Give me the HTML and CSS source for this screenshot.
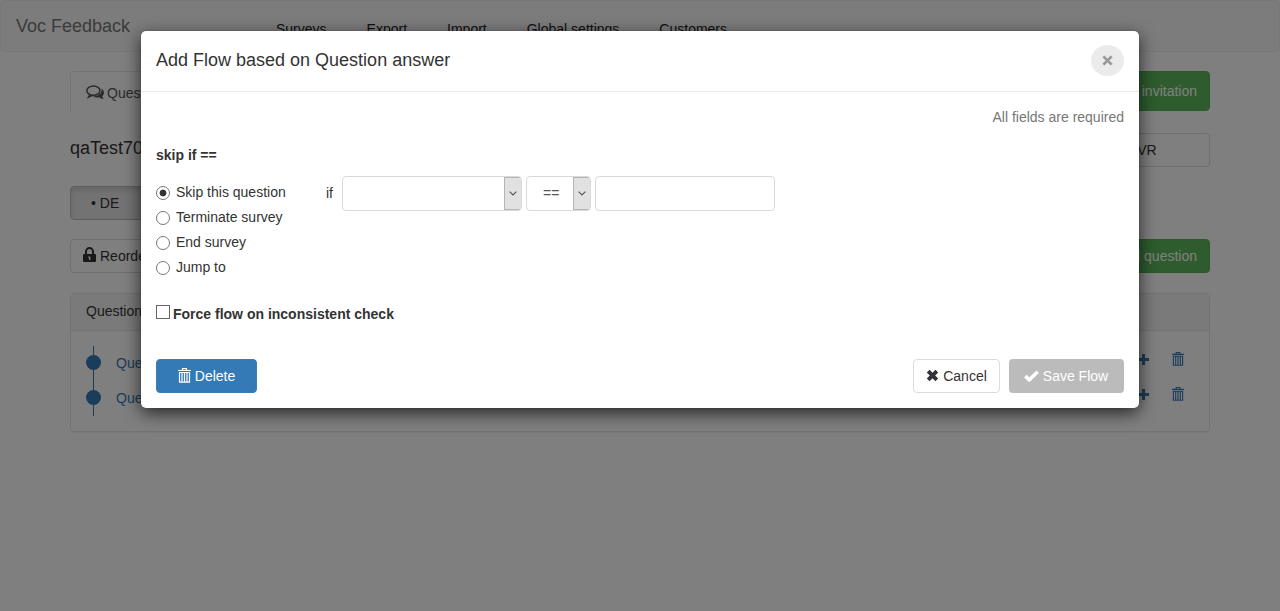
FILE: index.html
```html
<!DOCTYPE html>
<html lang="en">
<head>
<meta charset="utf-8">
<title>Voc Feedback</title>
<link rel="stylesheet" href="styles.css">
</head>
<body>
<svg class="defs" aria-hidden="true">
  <symbol id="trash" viewBox="0 0 13 15" preserveAspectRatio="none">
    <path d="M0 2.500h13M4.500 2V.6h4V2" fill="none" stroke="currentColor" stroke-width="1.200"/>
    <path d="M1.500 4.500h10v9.700h-10zM4 4.500v9.500M6.500 4.500v9.500M9 4.500v9.500" fill="none" stroke="currentColor" stroke-width="1.200"/>
  </symbol>
  <symbol id="cross" viewBox="0 0 12 12">
    <path d="M2 2l8 8M10 2l-8 8" fill="none" stroke="currentColor" stroke-width="3.6"/>
  </symbol>
  <symbol id="cross-thin" viewBox="0 0 12 12">
    <path d="M1.500 1.500l9 9M10.500 1.500l-9 9" fill="none" stroke="currentColor" stroke-width="3"/>
  </symbol>
  <symbol id="plus" viewBox="0 0 11 11">
    <path d="M5.5 0v11M0 5.5h11" fill="none" stroke="currentColor" stroke-width="3"/>
  </symbol>
</svg>

<nav class="navbar">
  <a class="brand">Voc Feedback</a>
  <div class="nav-links"><a>Surveys</a><a>Export</a><a>Import</a><a>Global settings</a><a>Customers</a></div>
</nav>

<main class="container">
  <div class="row tabs-row">
    <div class="tab">
      <svg class="icon-chat" viewBox="0 0 18 15"><ellipse cx="7.4" cy="5.6" rx="6.6" ry="4.700" fill="none" stroke="currentColor" stroke-width="1.5"/><path d="M4 9.400L2.200 12.400l4.500-2" fill="none" stroke="currentColor" stroke-width="1.3"/><path d="M15.500 3.600c3.200 2.200 3.100 5.600.6 7.600.3 1 .9 1.700 1.700 2.600-1.900.1-3.300-.4-4.500-1.500-2.500.5-4.700.1-6.300-1 5.600-.1 9.400-3 8.500-7.700z" fill="currentColor"/></svg>
      <span>Questions</span>
    </div>
    <div class="btn btn-success btn-tall">Send invitation</div>
  </div>
  <div class="row title-row">
    <h1 class="title">qaTest70</h1>
    <div class="btn btn-default btn-channel">IVR</div>
  </div>
  <div class="row lang-row"><div class="btn btn-default btn-lang">• DE</div></div>
  <div class="row tools-row">
    <div class="btn btn-default btn-reorder">
      <svg class="icon-lock" viewBox="0 0 13 16"><path d="M3 8V4.600a3.500 3.500 0 0 1 7 0V8" fill="none" stroke="currentColor" stroke-width="2"/><path fill-rule="evenodd" d="M1 7h11q1 0 1 1v6q0 1-1 1H1q-1 0-1-1V8q0-1 1-1zm4.400 2.500v1.400h.6v2.100h1.400v-3.500z" fill="currentColor"/></svg>
      <span>Reorder</span>
    </div>
    <div class="btn btn-success">Add question</div>
  </div>
  <section class="panel">
    <header class="panel-head">Questions</header>
    <div class="questions">
      <div class="question"><i class="node"></i><a>Question 1</a><svg class="icon-plus"><use href="#plus"/></svg><svg class="row-trash"><use href="#trash"/></svg></div>
      <div class="question"><i class="node"></i><a>Question 2</a><svg class="icon-plus"><use href="#plus"/></svg><svg class="row-trash"><use href="#trash"/></svg></div>
    </div>
  </section>
</main>

<div class="overlay">
  <div class="modal" role="dialog">
    <header class="modal-head">
      <h2>Add Flow based on Question answer</h2>
      <div class="close"><svg class="icon-close"><use href="#cross-thin"/></svg></div>
    </header>
    <div class="modal-body">
      <p class="required">All fields are required</p>
      <p class="rule">skip if ==</p>
      <div class="flow">
        <div class="options">
          <label><i class="radio checked"></i>Skip this question</label>
          <label><i class="radio"></i>Terminate survey</label>
          <label><i class="radio"></i>End survey</label>
          <label><i class="radio"></i>Jump to</label>
        </div>
        <div class="condition">
          <span class="if">if</span>
          <div class="field select wide"><span></span><b class="arrow"><svg class="chevron" viewBox="0 0 8 5"><path d="M.6.6L4 4 7.400.6" fill="none" stroke="#555" stroke-width="1.100"/></svg></b></div>
          <div class="field select narrow"><span>==</span><b class="arrow"><svg class="chevron" viewBox="0 0 8 5"><path d="M.6.6L4 4 7.400.6" fill="none" stroke="#555" stroke-width="1.100"/></svg></b></div>
          <div class="field wide"></div>
        </div>
      </div>
      <label class="force"><i class="checkbox"></i>Force flow on inconsistent check</label>
      <footer class="actions">
        <div class="btn btn-primary"><svg class="icon-trash"><use href="#trash"/></svg><span>Delete</span></div>
        <div class="btn btn-default btn-cancel"><svg class="icon-cross"><use href="#cross"/></svg><span>Cancel</span></div>
        <div class="btn btn-disabled"><svg class="icon-check" viewBox="0 0 15 12"><path d="M1.300 6.200l4 3.600L13.700 1.800" fill="none" stroke="currentColor" stroke-width="3.600"/></svg><span>Save Flow</span></div>
      </footer>
    </div>
  </div>
</div>
</body>
</html>
```
FILE: styles.css
```css
* { box-sizing: border-box; }
body { margin: 0; height: 611px; overflow: hidden; background: #fff; color: #333; font: 14px/20px "Liberation Sans", Arial, sans-serif; }
h1, h2, p { margin: 0; font-weight: normal; }
svg { flex: none; }
.defs { display: none; }

.navbar { display: flex; height: 52px; border: 1px solid #efefef; border-radius: 4px; background: #f8f8f8; }
.brand { width: 275px; padding: 15px 15px; font-size: 18px; color: #777; }
.nav-links { display: flex; gap: 40px; padding-top: 18px; color: #222; }

.container { width: 1140px; margin: 19px auto 0; }
.row { display: flex; justify-content: space-between; }
.tab { display: flex; gap: 3px; width: 130px; height: 42px; padding: 11px 15px; border: 1px solid #e9e9e9; border-bottom: 0; border-radius: 4px 4px 0 0; color: #555; }
.icon-chat { width: 18px; height: 15px; margin-top: 2px; }
.btn { display: flex; align-items: center; justify-content: center; height: 34px; padding: 0 12px; border: 1px solid transparent; border-radius: 4px; white-space: nowrap; }
.btn-success { background: #5cb85c; border-color: #55b355; color: #fff; }
.btn-tall { height: 40px; }
.btn-default { background: #fff; border-color: #dcdcdc; color: #333; }
.title-row { margin-top: 20px; }
.title { padding-top: 5px; font-size: 18px; }
.btn-channel { width: 130px; }
.lang-row { margin-top: 19px; }
.btn-lang { width: 90px; justify-content: flex-start; padding-left: 20px; background: #e6e6e6; border-color: #bdbdbd; box-shadow: inset 0 3px 5px rgba(0,0,0,.125); }
.tools-row { margin-top: 19px; }
.btn-reorder { gap: 4px; }
.icon-lock { width: 13px; height: 16px; margin-top: -2px; }
.panel { height: 139px; margin-top: 20px; border: 1px solid #e6e6e6; border-radius: 4px; box-shadow: 0 1px 1px rgba(0,0,0,.05); }
.panel-head { height: 37px; padding: 7px 15px; background: #f5f5f5; border-bottom: 1px solid #e6e6e6; }
.questions { padding: 15px; }
.question { display: flex; align-items: flex-start; height: 35px; color: #337ab7; background: linear-gradient(#337ab7, #337ab7) 7px 0 / 1px 100% no-repeat; }
.node { width: 15px; height: 15px; margin-top: 9px; border-radius: 50%; background: #337ab7; }
.question a { flex: 1; padding: 7px 0 0 15px; }
.icon-plus { width: 11px; height: 11px; margin: 8px 23px 0 0; }
.icon-trash { width: 13px; height: 15px; margin-top: -2px; }
.row-trash { width: 12px; height: 14px; margin: 6px 10px 0 0; }

.overlay { position: absolute; inset: 0; padding-top: 31px; background: rgba(0,0,0,.5); }
.modal { width: 998px; height: 377px; margin: 0 auto; background: #fff; border-radius: 5px; box-shadow: 0 0 1px rgba(0,0,0,.4), 0 5px 17px rgba(0,0,0,.7); }
.modal-head { display: flex; justify-content: space-between; height: 61px; padding: 14px 15px; border-bottom: 1px solid #e9e9e9; }
h2 { padding-top: 5px; font-size: 18px; }
.close { display: flex; align-items: center; justify-content: center; width: 33px; height: 31px; border-radius: 50%; background: #ebebeb; color: #999; }
.icon-close { width: 11px; height: 11px; }
.modal-body { padding: 15px 15px 0; }
.required { color: #777; text-align: right; }
.rule { margin-top: 18px; font-weight: bold; }
.flow { display: flex; height: 100px; margin-top: 15px; }
.options { width: 170px; margin-top: -1px; }
.options label { display: flex; align-items: center; gap: 6px; height: 25px; }
.radio { width: 14px; height: 14px; margin-top: 2px; border: 1px solid #777; border-radius: 50%; background: #fff; }
.checked { background: radial-gradient(circle, #333 0 3px, #fff 3.8px); }
.condition { display: flex; align-items: flex-start; gap: 4px; margin-top: -4px; }
.if { width: 12px; padding-top: 7px; }
.field { height: 35px; border: 1px solid #dadada; border-radius: 4px; background: #fff; overflow: hidden; }
.wide { width: 180px; }
.narrow { width: 65px; }
.select { display: flex; color: #555; }
.select span { flex: 1; padding: 6px 0 0 16px; }
.arrow { display: flex; align-items: center; justify-content: center; width: 18px; margin-right: -1px; padding-right: 1px; background: #e1e1e1; border: 1px solid #b5b5b5; border-right-color: #ccc; }
.chevron { width: 8px; height: 5px; }
.force { display: flex; gap: 3px; margin-top: 24px; font-weight: bold; }
.checkbox { width: 14px; height: 14px; margin-top: 1px; border: 1px solid #666; }
.actions { display: flex; margin-top: 35px; }
.actions .btn { gap: 4px; }
.btn-primary { width: 101px; background: #337ab7; border-color: #3c7db5; color: #fff; }
.btn-cancel { width: 87px; margin: 0 9px 0 auto; }
.icon-cross { width: 13px; height: 13px; margin-top: -2px; }
.btn-disabled { width: 115px; padding-right: 13px; background: #bbb; color: #fff; }
.icon-check { width: 15px; height: 12px; margin-top: -1px; }
```
